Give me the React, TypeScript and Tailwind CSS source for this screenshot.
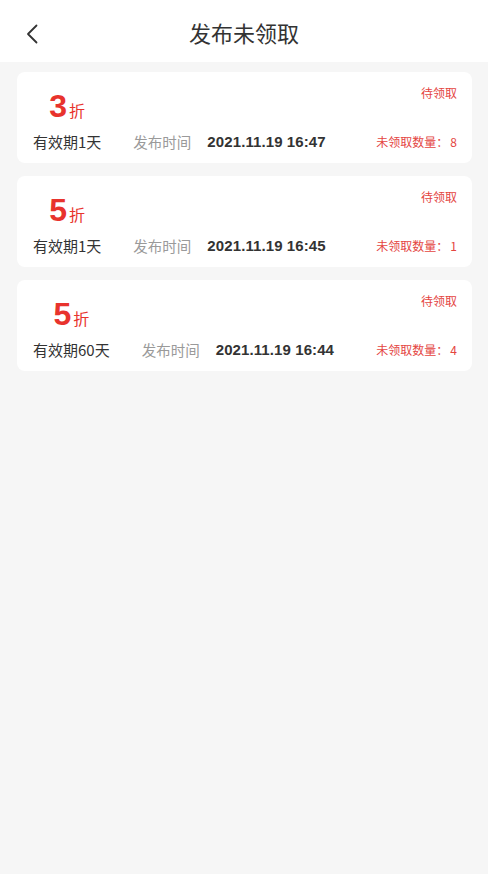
import React from 'react';

const FONT = '"Noto Sans CJK SC", "Noto Sans", sans-serif';
const NUM_FONT = '"Liberation Sans", "Noto Sans CJK SC", sans-serif';

interface Coupon {
  discount: number;
  days: number;
  time: string;
  left: number;
}

const coupons: Coupon[] = [
  { discount: 3, days: 1, time: '2021.11.19 16:47', left: 8 },
  { discount: 5, days: 1, time: '2021.11.19 16:45', left: 1 },
  { discount: 5, days: 60, time: '2021.11.19 16:44', left: 4 },
];

function CouponCard({ coupon }: { coupon: Coupon }) {
  return (
    <div className="bg-white rounded-[8px] pl-4 pr-[15px] pt-3 pb-[11px]">
      <div className="grid grid-cols-[auto_auto_auto_1fr_auto] items-start">
        <div className="mt-[6px] flex items-end justify-center h-[32px]">
          <span
            className="text-[32px] leading-[32px] font-bold text-[#e8332d]"
            style={{ fontFamily: NUM_FONT }}
          >
            {coupon.discount}
          </span>
          <span className="text-[16px] leading-[20px] text-[#e8332d] mb-[2px] ml-[2px]">折</span>
        </div>
        <div />
        <div />
        <div />
        <div className="justify-self-end text-[12px] leading-[18px] text-[#e4453f]">待领取</div>

        <div className="mt-[10px] text-[15px] leading-[20px] text-[#333333]">
          有效期{coupon.days}天
        </div>
        <div className="mt-[10px] ml-8 text-[14.5px] leading-[20px] text-[#9a9a9a]">发布时间</div>
        <div
          className="mt-[10px] ml-4 text-[15px] leading-[20px] font-bold text-[#333333] tracking-[0.1px]"
          style={{ fontFamily: NUM_FONT }}
        >
          {coupon.time}
        </div>
        <div />
        <div className="justify-self-end mt-[10px] text-[12px] leading-[20px] text-[#e4453f]">
          未领取数量：<span className="ml-[2px]">{coupon.left}</span>
        </div>
      </div>
    </div>
  );
}

export default function App() {
  return (
    <div className="min-h-[874px] bg-[#f6f6f6]" style={{ fontFamily: FONT }}>
      <div className="relative h-[62px] bg-white flex items-center justify-center">
        <button type="button" className="absolute left-[22px] top-[20px] p-1">
          <svg width="12" height="20" viewBox="0 0 12 20" fill="none">
            <path d="M10.5 1.5 L2 10 L10.5 18.5" stroke="#333333" strokeWidth="1.8" strokeLinecap="round" strokeLinejoin="round" />
          </svg>
        </button>
        <h1 className="text-[22px] leading-[30px] text-[#333333] mt-[2px]">发布未领取</h1>
      </div>

      <div className="flex flex-col gap-[13px] pl-[17px] pr-4 pt-[10px]">
        {coupons.map((c, i) => (
          <CouponCard key={i} coupon={c} />
        ))}
      </div>
    </div>
  );
}
